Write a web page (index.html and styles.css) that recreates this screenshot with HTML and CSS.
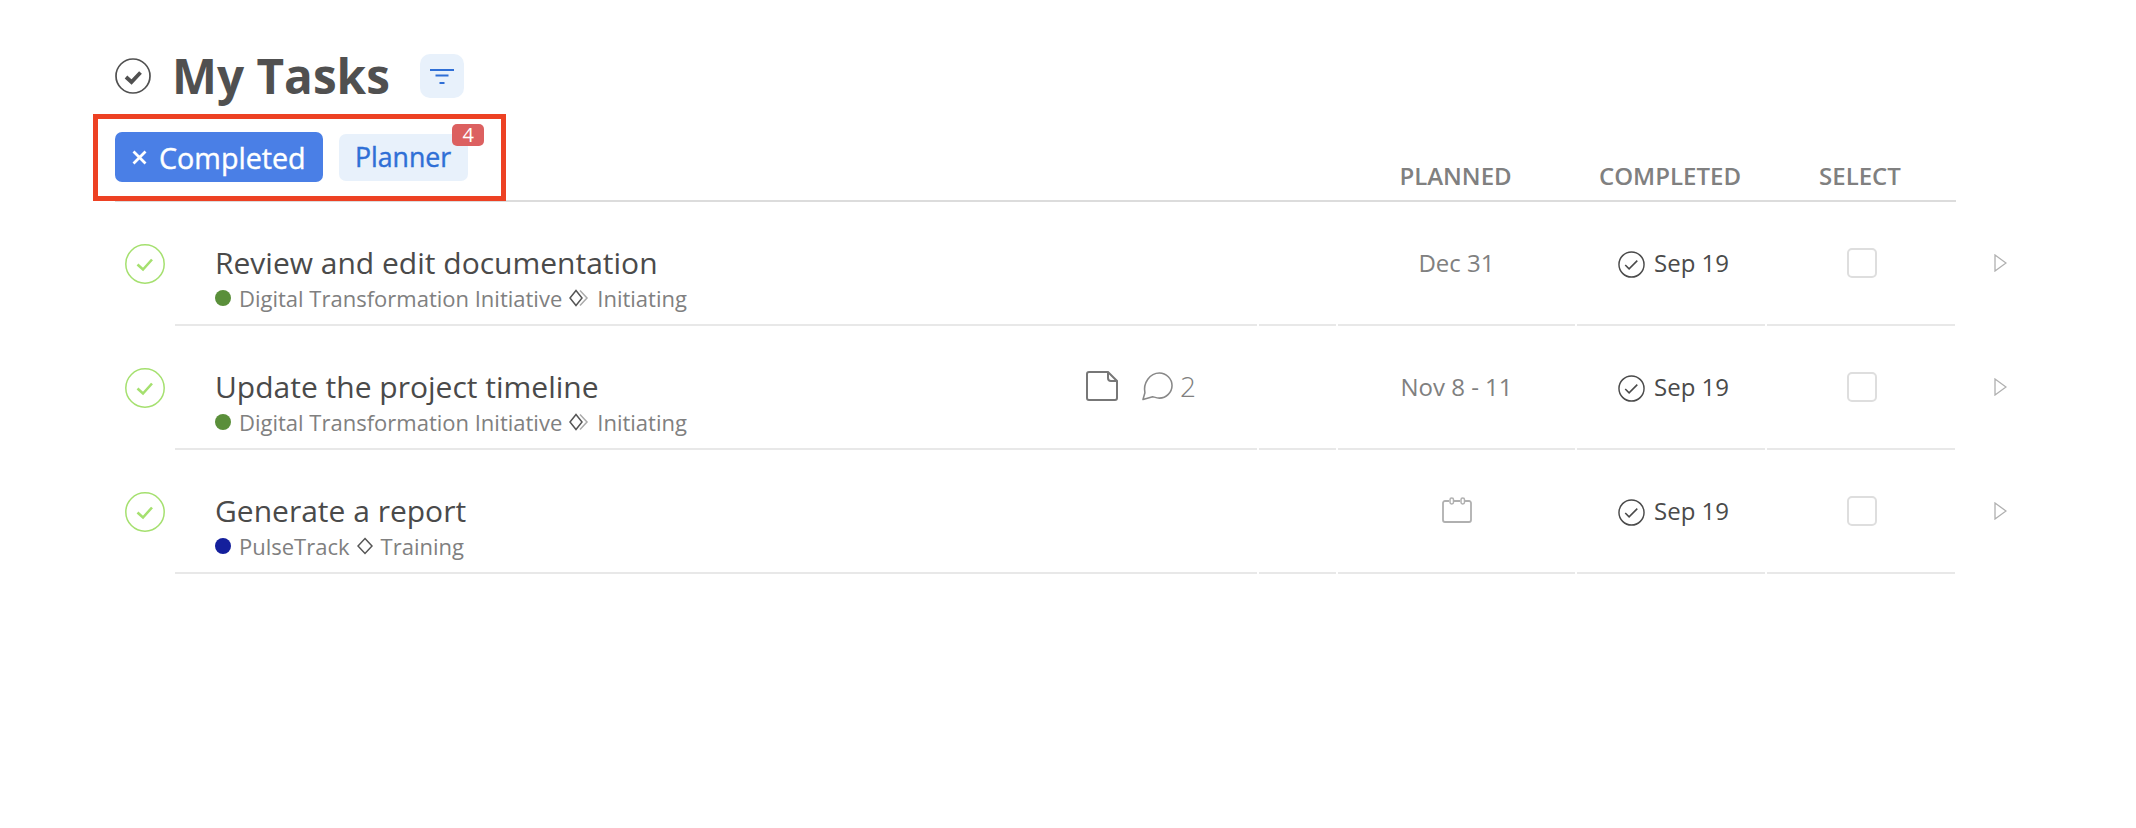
FILE: index.html
```html
<!DOCTYPE html>
<html lang="en">
<head>
<meta charset="utf-8">
<title>My Tasks</title>
<link rel="stylesheet" href="styles.css">
</head>
<body>
<main class="page">
  <header class="title-bar">
    <svg class="title-icon" viewBox="0 0 36 36"><circle cx="18" cy="18" r="17" fill="none" stroke="#505050" stroke-width="1.700"/><path d="M11 19l5.500 5 9-9.500" fill="none" stroke="#505050" stroke-width="3.800"/></svg>
    <h1 class="title">My Tasks</h1>
    <button class="filter-btn"><svg viewBox="0 0 24 15" class="filter-icon"><path d="M0 1h24M5.500 6.500h13M9.500 14h5" fill="none" stroke="#2f6fd6" stroke-width="2"/></svg></button>
  </header>
  <div class="toolbar">
    <div class="tabs">
      <span class="chip chip-on"><svg class="chip-x" viewBox="0 0 15 15"><path d="M1.500 1.500l12 12M13.500 1.500l-12 12" fill="none" stroke="#fff" stroke-width="2.800"/></svg>Completed</span>
      <span class="chip chip-off">Planner<span class="badge">4</span></span>
    </div>
    <div class="col-heads">
      <span class="head">PLANNED</span>
      <span class="head">COMPLETED</span>
      <span class="head">SELECT</span>
    </div>
  </div>
  <section class="rows">
    <div class="row">
      <svg class="done" viewBox="0 0 40 40"><circle cx="20" cy="20" r="19.200" fill="none" stroke="#a5e06f" stroke-width="1.500"/><path d="M12.500 20.500l5.500 5 9-10" fill="none" stroke="#a5e06f" stroke-width="2.600"/></svg>
      <div class="cell c-main"><div class="task">Review and edit documentation</div><div class="meta"><i class="dot green"></i><span>Digital Transformation Initiative</span><svg class="phase" viewBox="0 0 20 18"><path d="M7 1.500L13 9l-6 7.500L1 9z" fill="none" stroke="#555" stroke-width="1.500"/><path d="M11 1.500L18 9l-7 7.500" fill="none" stroke="#aaa" stroke-width="1.500"/></svg><span>Initiating</span></div></div>
      <div class="cell c-extra"></div>
      <div class="cell c-date">Dec 31</div>
      <div class="cell c-done"><svg class="tick" viewBox="0 0 28 28"><circle cx="14" cy="14" r="13" fill="none" stroke="#4a4a4a" stroke-width="1.500"/><path d="M7.500 14.500l4 4 8.500-8.500" fill="none" stroke="#4a4a4a" stroke-width="1.600"/></svg>Sep 19</div>
      <div class="cell c-sel"><i class="box"></i></div>
      <svg class="play" viewBox="0 0 13 18"><path d="M1 1l11 8-11 8z" fill="none" stroke="#b0b0b0" stroke-width="1.300"/></svg>
    </div>
    <div class="row">
      <svg class="done" viewBox="0 0 40 40"><circle cx="20" cy="20" r="19.200" fill="none" stroke="#a5e06f" stroke-width="1.500"/><path d="M12.500 20.500l5.500 5 9-10" fill="none" stroke="#a5e06f" stroke-width="2.600"/></svg>
      <div class="cell c-main c-flex">
        <div><div class="task">Update the project timeline</div><div class="meta"><i class="dot green"></i><span>Digital Transformation Initiative</span><svg class="phase" viewBox="0 0 20 18"><path d="M7 1.500L13 9l-6 7.500L1 9z" fill="none" stroke="#555" stroke-width="1.500"/><path d="M11 1.500L18 9l-7 7.500" fill="none" stroke="#aaa" stroke-width="1.500"/></svg><span>Initiating</span></div></div>
        <div class="attach">
          <svg class="note" viewBox="0 0 32 30"><path d="M3 1h19l9 9v17a2 2 0 0 1-2 2H3a2 2 0 0 1-2-2V3a2 2 0 0 1 2-2z" fill="none" stroke="#777" stroke-width="2"/><path d="M22 1v6a3 3 0 0 0 3 3h6" fill="none" stroke="#777" stroke-width="2"/></svg>
          <svg class="bubble" viewBox="0 0 32 30"><path d="M3 22C1 12 8 1.500 18 1.500c7 0 13 6 13 13s-6 13-13 13c-3 0-5-1-7-1.500L1 29z" fill="none" stroke="#888" stroke-width="1.600" stroke-linejoin="round"/></svg>
          <span class="count">2</span>
        </div>
      </div>
      <div class="cell c-extra"></div>
      <div class="cell c-date">Nov 8 - 11</div>
      <div class="cell c-done"><svg class="tick" viewBox="0 0 28 28"><circle cx="14" cy="14" r="13" fill="none" stroke="#4a4a4a" stroke-width="1.500"/><path d="M7.500 14.500l4 4 8.500-8.500" fill="none" stroke="#4a4a4a" stroke-width="1.600"/></svg>Sep 19</div>
      <div class="cell c-sel"><i class="box"></i></div>
      <svg class="play" viewBox="0 0 13 18"><path d="M1 1l11 8-11 8z" fill="none" stroke="#b0b0b0" stroke-width="1.300"/></svg>
    </div>
    <div class="row">
      <svg class="done" viewBox="0 0 40 40"><circle cx="20" cy="20" r="19.200" fill="none" stroke="#a5e06f" stroke-width="1.500"/><path d="M12.500 20.500l5.500 5 9-10" fill="none" stroke="#a5e06f" stroke-width="2.600"/></svg>
      <div class="cell c-main"><div class="task">Generate a report</div><div class="meta"><i class="dot navy"></i><span>PulseTrack</span><svg class="phase single" viewBox="0 0 16 18"><path d="M8 1.500L15 9l-7 7.500L1 9z" fill="none" stroke="#555" stroke-width="1.500"/></svg><span>Training</span></div></div>
      <div class="cell c-extra"></div>
      <div class="cell c-date"><svg class="cal" viewBox="0 0 30 26"><path d="M7 4H3a2 2 0 0 0-2 2v17a2 2 0 0 0 2 2h24a2 2 0 0 0 2-2V6a2 2 0 0 0-2-2h-4M12 4h6" fill="none" stroke="#b0b0b0" stroke-width="1.800"/><rect x="8" y="1" width="3.500" height="6" rx="1.700" fill="none" stroke="#b0b0b0" stroke-width="1.500"/><rect x="19" y="1" width="3.500" height="6" rx="1.700" fill="none" stroke="#b0b0b0" stroke-width="1.500"/></svg></div>
      <div class="cell c-done"><svg class="tick" viewBox="0 0 28 28"><circle cx="14" cy="14" r="13" fill="none" stroke="#4a4a4a" stroke-width="1.500"/><path d="M7.500 14.500l4 4 8.500-8.500" fill="none" stroke="#4a4a4a" stroke-width="1.600"/></svg>Sep 19</div>
      <div class="cell c-sel"><i class="box"></i></div>
      <svg class="play" viewBox="0 0 13 18"><path d="M1 1l11 8-11 8z" fill="none" stroke="#b0b0b0" stroke-width="1.300"/></svg>
    </div>
  </section>
</main>
</body>
</html>
```
FILE: styles.css
```css
*, *::before { box-sizing: border-box; }
html, body { margin: 0; background: #fff; }
body { font-family: "Open Sans", sans-serif; color: #4a4a4a; width: 2136px; height: 828px; overflow: hidden; }
.page { padding: 54px 0 0 115px; }
.title-bar { display: flex; align-items: center; height: 44px; }
.title-icon { width: 36px; height: 36px; margin-right: 21px; }
.title { margin: 0; font-size: 47.700px; font-weight: 700; color: #505050; line-height: 44px; }
.filter-btn { border: 0; padding: 0; margin-left: 30px; width: 44px; height: 44px; border-radius: 10px; background: #e8f1fb; display: flex; align-items: center; justify-content: center; }
.filter-icon { width: 24px; height: 15px; }
.toolbar { display: flex; justify-content: space-between; position: relative; width: 1841px; border-bottom: 2px solid #dcdcdc; height: 104px; }
.toolbar::before { content: ""; position: absolute; left: -22px; top: 16px; width: 413px; height: 87px; border: 5px solid #ed4123; }
.tabs { display: flex; align-items: flex-start; gap: 16px; padding-top: 34px; }
.chip { border-radius: 7px; white-space: nowrap; font-weight: 400; -webkit-text-stroke: 0.4px currentColor; }
.chip-on { display: flex; align-items: center; gap: 12px; width: 208px; height: 50px; padding-left: 17px; background: #4a7fe6; color: #fff; font-size: 28.700px; }
.chip-x { width: 15px; height: 15px; }
.chip-off { position: relative; background: #e8f1fb; color: #2f6fd6; padding: 0 17px 0 16px; height: 47px; line-height: 46px; margin-top: 2px; font-size: 26.700px; }
.badge { position: absolute; right: -16px; top: -10px; width: 32px; height: 22px; border-radius: 5px; background: #dc6060; color: #fff; font-size: 20px; font-weight: 400; line-height: 22px; text-align: center; -webkit-text-stroke: 0; }
.col-heads { display: grid; grid-template-columns: 237px 188px 188px; column-gap: 2px; align-items: end; padding: 0 2px 8px 0; }
.head { font-size: 24px; font-weight: 600; color: #808080; text-align: center; line-height: 32px; }
.row { display: grid; grid-template-columns: 58px 1082px 77px 237px 188px 188px 60px; column-gap: 2px; height: 124px; }
.cell { border-bottom: 2px solid #e8e8e8; }
.done { width: 40px; height: 40px; margin: 42px 0 0 10px; }
.c-main { padding: 40px 0 0 40px; }
.c-flex { display: flex; justify-content: space-between; }
.task { font-size: 30px; line-height: 42px; color: #4a4a4a; }
.meta { display: flex; align-items: center; font-size: 22px; line-height: 30px; color: #808080; margin-top: -1px; }
.dot { width: 16px; height: 16px; border-radius: 50%; margin-right: 8px; }
.green { background: #5a8f3a; }
.navy { background: #141f9c; }
.phase { width: 20px; height: 18px; margin: 0 8px 0 7px; }
.phase.single { width: 16px; }
.attach { display: flex; align-items: center; height: 32px; margin-top: 4px; }
.note { width: 32px; height: 30px; }
.bubble { width: 31px; height: 30px; margin-left: 24px; }
.count { font-size: 28px; font-weight: 300; color: #808080; margin: 0 61px 0 7px; }
.c-date, .c-done, .c-sel { display: flex; justify-content: center; align-items: flex-start; padding-top: 46px; font-size: 24px; line-height: 30px; }
.c-date { color: #808080; }
.c-done { color: #4a4a4a; gap: 9px; padding-left: 5px; }
.tick { width: 27px; height: 27px; margin-top: 3px; flex: none; }
.box { width: 30px; height: 30px; border: 2px solid #dedede; border-radius: 5px; display: block; margin-left: 2px; }
.cal { width: 30px; height: 26px; margin-top: 1px; }
.play { width: 13px; height: 18px; margin: 52px 0 0 37px; }
```
